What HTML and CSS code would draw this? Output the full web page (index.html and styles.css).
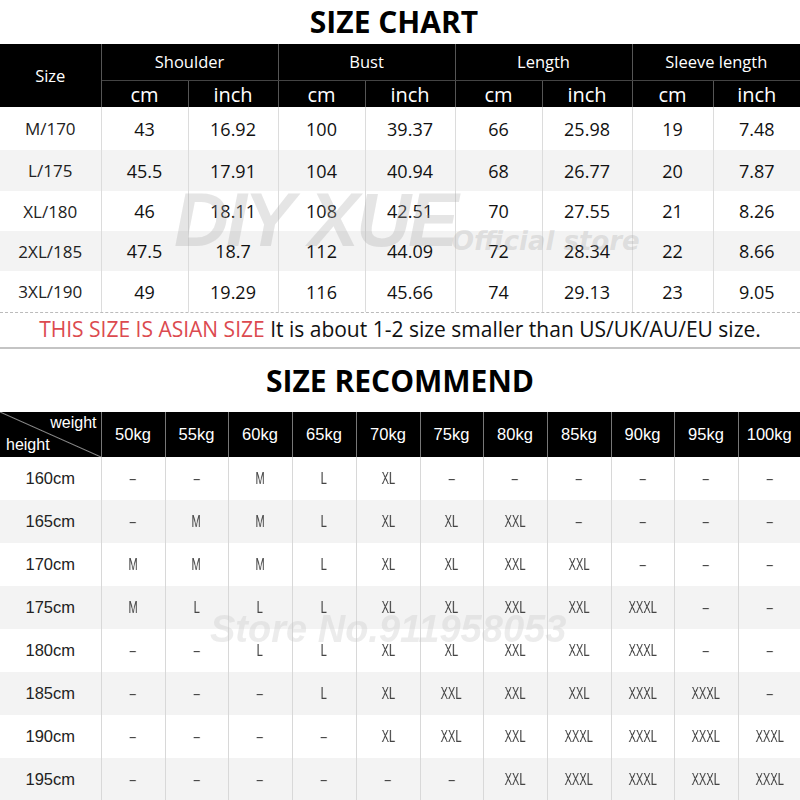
FILE: index.html
```html
<!DOCTYPE html>
<html>
<head>
<meta charset="utf-8">
<title>Size Chart</title>
<link rel="stylesheet" href="styles.css">
</head>
<body>
<div class="page">
  <h1 class="title">SIZE CHART</h1>
  <table class="chart">
    <colgroup>
      <col class="c-size"><col class="c-87"><col class="c-90"><col class="c-87"><col class="c-90"><col class="c-87"><col class="c-90"><col class="c-81"><col class="c-87">
    </colgroup>
    <thead>
      <tr class="h1">
        <th rowspan="2" class="size-h">Size</th>
        <th colspan="2">Shoulder</th>
        <th colspan="2">Bust</th>
        <th colspan="2">Length</th>
        <th colspan="2" class="last">Sleeve length</th>
      </tr>
      <tr class="h2">
        <th>cm</th><th>inch</th><th>cm</th><th>inch</th><th>cm</th><th>inch</th><th>cm</th><th class="last">inch</th>
      </tr>
    </thead>
    <tbody>
      <tr><td class="lbl">M/170</td><td>43</td><td>16.92</td><td>100</td><td>39.37</td><td>66</td><td>25.98</td><td>19</td><td>7.48</td></tr>
      <tr><td class="lbl">L/175</td><td>45.5</td><td>17.91</td><td>104</td><td>40.94</td><td>68</td><td>26.77</td><td>20</td><td>7.87</td></tr>
      <tr><td class="lbl">XL/180</td><td>46</td><td>18.11</td><td>108</td><td>42.51</td><td>70</td><td>27.55</td><td>21</td><td>8.26</td></tr>
      <tr><td class="lbl">2XL/185</td><td>47.5</td><td>18.7</td><td>112</td><td>44.09</td><td>72</td><td>28.34</td><td>22</td><td>8.66</td></tr>
      <tr><td class="lbl">3XL/190</td><td>49</td><td>19.29</td><td>116</td><td>45.66</td><td>74</td><td>29.13</td><td>23</td><td>9.05</td></tr>
    </tbody>
  </table>
  <p class="note"><span class="note-text"><span class="red">THIS SIZE IS ASIAN SIZE</span> It is about 1-2 size smaller than US/UK/AU/EU size.</span></p>
  <h2 class="title title2">SIZE RECOMMEND</h2>
  <table class="rec">
    <colgroup>
      <col class="r-first"><col class="r64"><col class="r63"><col class="r64"><col class="r64"><col class="r64"><col class="r63"><col class="r64"><col class="r64"><col class="r63"><col class="r64"><col class="r62">
    </colgroup>
    <thead>
      <tr>
        <th class="corner"><span class="w">weight</span><span class="h">height</span></th>
        <th>50kg</th><th>55kg</th><th>60kg</th><th>65kg</th><th>70kg</th><th>75kg</th><th>80kg</th><th>85kg</th><th>90kg</th><th>95kg</th><th>100kg</th>
      </tr>
    </thead>
    <tbody>
      <tr><td class="lbl">160cm</td><td><span class="sz">–</span></td><td><span class="sz">–</span></td><td><span class="sz">M</span></td><td><span class="sz">L</span></td><td><span class="sz">XL</span></td><td><span class="sz">–</span></td><td><span class="sz">–</span></td><td><span class="sz">–</span></td><td><span class="sz">–</span></td><td><span class="sz">–</span></td><td><span class="sz">–</span></td></tr>
      <tr><td class="lbl">165cm</td><td><span class="sz">–</span></td><td><span class="sz">M</span></td><td><span class="sz">M</span></td><td><span class="sz">L</span></td><td><span class="sz">XL</span></td><td><span class="sz">XL</span></td><td><span class="sz">XXL</span></td><td><span class="sz">–</span></td><td><span class="sz">–</span></td><td><span class="sz">–</span></td><td><span class="sz">–</span></td></tr>
      <tr><td class="lbl">170cm</td><td><span class="sz">M</span></td><td><span class="sz">M</span></td><td><span class="sz">M</span></td><td><span class="sz">L</span></td><td><span class="sz">XL</span></td><td><span class="sz">XL</span></td><td><span class="sz">XXL</span></td><td><span class="sz">XXL</span></td><td><span class="sz">–</span></td><td><span class="sz">–</span></td><td><span class="sz">–</span></td></tr>
      <tr><td class="lbl">175cm</td><td><span class="sz">M</span></td><td><span class="sz">L</span></td><td><span class="sz">L</span></td><td><span class="sz">L</span></td><td><span class="sz">XL</span></td><td><span class="sz">XL</span></td><td><span class="sz">XXL</span></td><td><span class="sz">XXL</span></td><td><span class="sz">XXXL</span></td><td><span class="sz">–</span></td><td><span class="sz">–</span></td></tr>
      <tr><td class="lbl">180cm</td><td><span class="sz">–</span></td><td><span class="sz">–</span></td><td><span class="sz">L</span></td><td><span class="sz">L</span></td><td><span class="sz">XL</span></td><td><span class="sz">XL</span></td><td><span class="sz">XXL</span></td><td><span class="sz">XXL</span></td><td><span class="sz">XXXL</span></td><td><span class="sz">–</span></td><td><span class="sz">–</span></td></tr>
      <tr><td class="lbl">185cm</td><td><span class="sz">–</span></td><td><span class="sz">–</span></td><td><span class="sz">–</span></td><td><span class="sz">L</span></td><td><span class="sz">XL</span></td><td><span class="sz">XXL</span></td><td><span class="sz">XXL</span></td><td><span class="sz">XXL</span></td><td><span class="sz">XXXL</span></td><td><span class="sz">XXXL</span></td><td><span class="sz">–</span></td></tr>
      <tr><td class="lbl">190cm</td><td><span class="sz">–</span></td><td><span class="sz">–</span></td><td><span class="sz">–</span></td><td><span class="sz">–</span></td><td><span class="sz">XL</span></td><td><span class="sz">XXL</span></td><td><span class="sz">XXL</span></td><td><span class="sz">XXXL</span></td><td><span class="sz">XXXL</span></td><td><span class="sz">XXXL</span></td><td><span class="sz">XXXL</span></td></tr>
      <tr><td class="lbl">195cm</td><td><span class="sz">–</span></td><td><span class="sz">–</span></td><td><span class="sz">–</span></td><td><span class="sz">–</span></td><td><span class="sz">–</span></td><td><span class="sz">–</span></td><td><span class="sz">XXL</span></td><td><span class="sz">XXXL</span></td><td><span class="sz">XXXL</span></td><td><span class="sz">XXXL</span></td><td><span class="sz">XXXL</span></td></tr>
    </tbody>
  </table>
  <div class="wm wm-brand">DIY XUE</div>
  <div class="wm wm-official">Official store</div>
  <div class="wm wm-store">Store No.911958053</div>
</div>
</body>
</html>
```

FILE: styles.css
```css
* { box-sizing: border-box; }
html, body { margin: 0; padding: 0; background: #fff; }
.page {
  position: relative;
  width: 800px;
  height: 800px;
  overflow: hidden;
  font-family: "Open Sans", "Noto Sans", sans-serif;
  color: #111;
}
.title {
  margin: 0;
  height: 44px;
  line-height: 44px;
  text-align: center;
  font-size: 30px;
  font-weight: 700;
  color: #000;
}
.title:first-child { padding-right: 12px; }
.title2 {
  height: 63px;
  line-height: 63px;
}

table {
  width: 800px;
  border-collapse: collapse;
  table-layout: fixed;
  border-spacing: 0;
}
th, td { padding: 0; text-align: center; }

/* size chart */
.c-size { width: 101px; }
.c-87 { width: 87px; }
.c-90 { width: 90px; }
.c-81 { width: 81px; }
.chart thead th {
  background: #000;
  color: #fff;
  font-weight: 400;
  border-right: 1px solid #555;
}
.chart thead th.last { border-right: none; }
.chart .h1 th { height: 36px; font-size: 16.5px; border-bottom: 1px solid #444; }
.chart .h1 th.size-h { border-bottom: none; }
.chart .h2 th { height: 27px; font-size: 20px; line-height: 20px; padding-top: 2px; }
.chart tbody td {
  height: 41px;
  font-size: 18px;
  border-right: 1px solid #dcdcdc;
}
.chart tbody td:last-child { border-right: none; }
.chart tbody tr:first-child td { height: 43px; }
.chart tbody tr:nth-child(3) td,
.chart tbody tr:nth-child(4) td { height: 40px; }
.chart tbody tr:nth-child(even) td { background: #f3f3f3; }
.chart td.lbl { font-size: 17px; color: #222; }

.note {
  margin: 0;
  height: 37px;
  border-top: 1px dashed #bbb;
  border-bottom: 2px solid #c4c4c4;
  text-align: center;
  font-size: 21px;
  line-height: 33px;
  color: #111;
  white-space: nowrap;
}
.note-text { display: inline-block; }
.red { color: #dc4a4f; }

/* recommend */
.rec { font-family: "Liberation Sans", Arial, sans-serif; }
.r-first { width: 101px; }
.r64 { width: 64px; }
.r63 { width: 63px; }
.r62 { width: 62px; }
.rec thead th {
  height: 45px;
  background: #000;
  color: #fff;
  font-weight: 400;
  font-size: 16.5px;
  border-right: 1px solid #777;
}
.rec thead th:last-child { border-right: none; }
.rec th.corner {
  position: relative;
  background: linear-gradient(to top right, #000 calc(50% - 1px), #8a8a8a 50%, #000 calc(50% + 1px));
  font-size: 16px;
  border-right: 1px solid #777;
}
.corner .w {
  position: absolute;
  right: 4px;
  top: 2px;
}
.corner .h {
  position: absolute;
  left: 6px;
  bottom: 3px;
}
.rec tbody td {
  height: 43px;
  border-right: 1px solid #d8d8d8;
  font-size: 17px;
  color: #444;
}
.rec tbody td:last-child { border-right: none; }
.rec tbody tr:nth-child(even) td { background: #f3f3f3; }
.rec td.lbl { font-size: 16.5px; color: #222; }
.sz {
  display: inline-block;
  transform: scaleX(0.65);
  will-change: transform;
}

/* watermarks */
.wm {
  position: absolute;
  pointer-events: none;
  font-weight: 700;
  font-style: italic;
  white-space: nowrap;
}
.wm-brand {
  left: 174px;
  top: 176px;
  font-family: "Liberation Sans", Arial, sans-serif;
  font-size: 76px;
  letter-spacing: -3px;
  color: rgba(170, 170, 170, 0.3);
}
.wm-official {
  left: 452px;
  top: 226px;
  font-family: "DejaVu Sans", sans-serif;
  font-size: 26px;
  color: rgba(170, 170, 170, 0.3);
}
.wm-store {
  left: 210px;
  top: 608px;
  font-family: "Liberation Sans", Arial, sans-serif;
  font-size: 38px;
  color: rgba(200, 200, 200, 0.35);
}
```
